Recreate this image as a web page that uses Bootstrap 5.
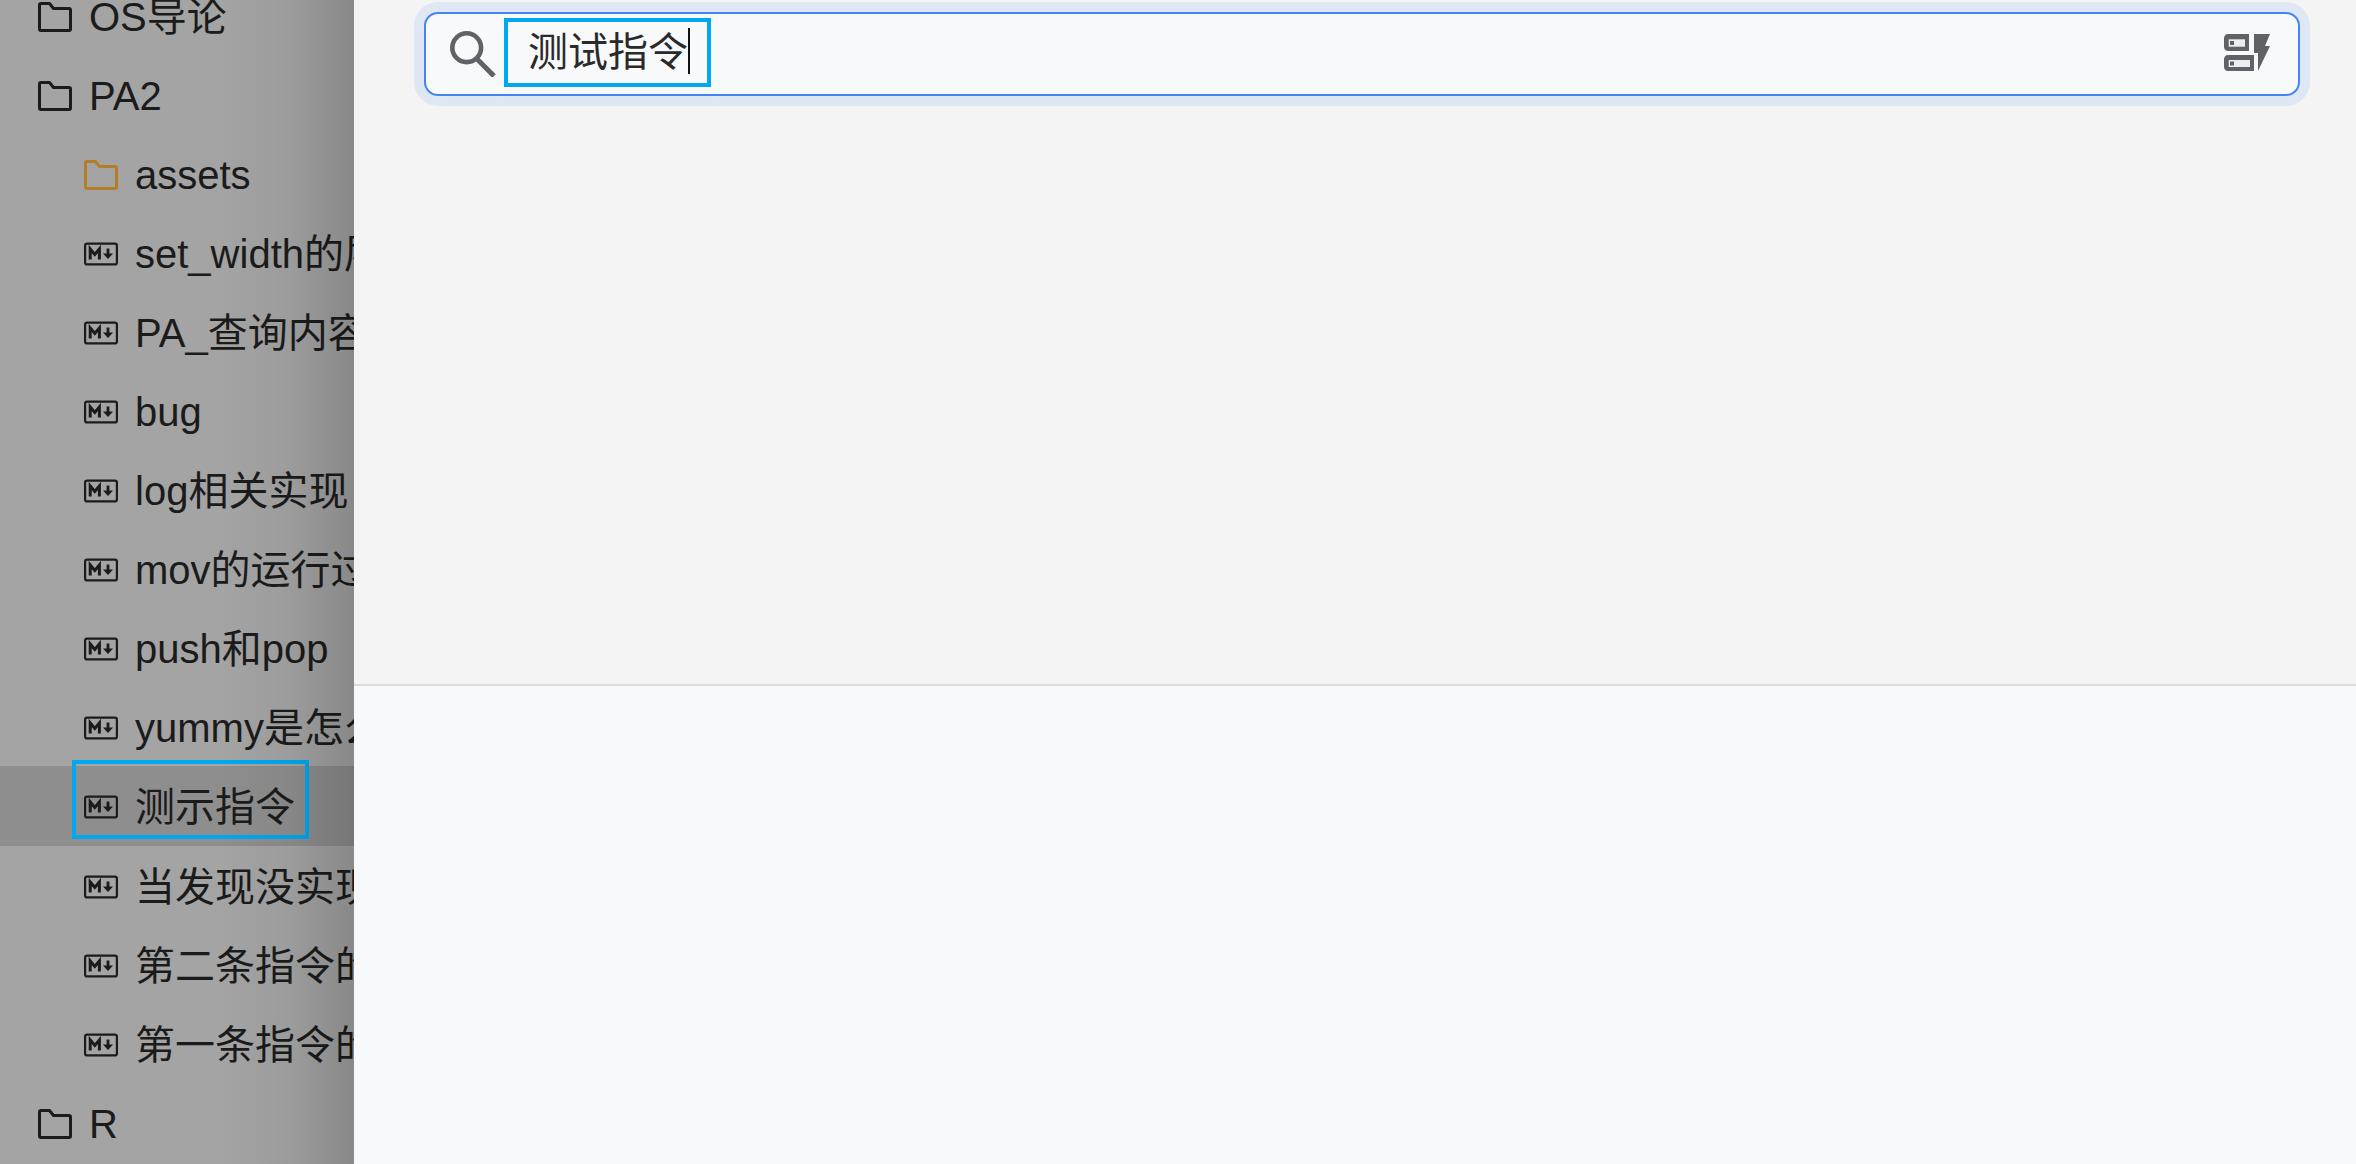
<!DOCTYPE html>
<html lang="zh-CN">
<head>
    <meta charset="UTF-8">
    <meta name="viewport" content="width=device-width, initial-scale=1.0">
    <title>Search</title>
    <link rel="stylesheet" href="https://cdn.jsdelivr.net/npm/bootstrap@5.3.0/dist/css/bootstrap.min.css">
    <style>
        html, body { height: 100%; }
        body {
            background: #f8f9fb;
            font-family: "Liberation Sans", "Noto Sans CJK SC", sans-serif;
            color: #1b1b1b;
            overflow: hidden;
        }
        .icon-sprite { position: absolute; }
        .app-shell { height: 1164px; }
        .file-pane {
            width: 354px;
            flex: 0 0 354px;
            background: #a4a4a4;
            overflow: hidden;
            position: relative;
        }
        .file-pane::after {
            content: "";
            position: absolute;
            inset: 0;
            background: linear-gradient(90deg, rgba(0,0,0,0) 62%, rgba(0,0,0,.05) 82%, rgba(0,0,0,.17) 100%);
            pointer-events: none;
        }
        .file-list { margin-top: -24px; }
        .file-row {
            height: 79px;
            font-size: 40px;
            line-height: 76px;
            white-space: nowrap;
            padding-left: 84px;
            padding-top: 2px;
            gap: 17px;
            flex: 0 0 79px;
        }
        .file-row.top-level { padding-left: 38px; }
        .file-row.selected { background: #8e8e8e; position: relative; height: 80px; flex-basis: 80px; }
        .file-row.selected::before {
            content: "";
            position: absolute;
            left: 72px;
            top: -6px;
            width: 237px;
            height: 79px;
            border: 4px solid #00a8f0;
        }
        .file-icon { flex: 0 0 34px; width: 34px; height: 34px; }
        .folder-orange { color: #b67d28; }
        .search-area { height: 684px; flex: 0 0 684px; background: #f4f4f4; padding: 12px 56px 0 70px; }
        .search-box {
            height: 84px;
            background: #f8f9fb;
            border: 2px solid #4285f4;
            border-radius: 14px;
            box-shadow: 0 0 0 10px #dfe6f4;
            padding: 0 28px 0 24px;
        }
        .search-icon { width: 46px; height: 46px; margin-right: 8px; }
        .query-box {
            width: 207px;
            height: 69px;
            margin-bottom: 3px;
            border: 4px solid #00a8f0;
            font-size: 40px;
            line-height: 61px;
            padding-left: 20px;
            white-space: nowrap;
            color: #2a2a2a;
        }
        .caret-mark {
            display: inline-block;
            width: 2px;
            height: 46px;
            background: #111;
            vertical-align: -8px;
        }
        .mode-icon { width: 46px; height: 37px; margin-bottom: 3px; }
        .pane-divider { height: 2px; flex: 0 0 2px; background: #dcdcdc; }
        .result-area { background: #f8f9fb; }
    </style>
</head>
<body>
    <svg width="0" height="0" class="icon-sprite">
        <symbol id="ic-folder" viewBox="0 0 34 34">
            <path d="M1.5 29V5C1.5 4 2.1 3.5 3 3.5H11.5L15.5 8.5H31C31.9 8.5 32.5 9.1 32.5 10V29C32.5 29.9 31.9 30.5 31 30.5H3C2.1 30.5 1.5 29.9 1.5 29Z" fill="none" stroke="currentColor" stroke-width="3" stroke-linejoin="round"/>
        </symbol>
        <symbol id="ic-md" viewBox="0 0 34 34">
            <rect x="1.1" y="6.6" width="31.8" height="20.8" rx="2" fill="none" stroke="currentColor" stroke-width="2.2"/>
            <path d="M6.2 22.5V12l4.6 5.5 4.6-5.5v10.5" fill="none" stroke="currentColor" stroke-width="3"/>
            <path d="M24 11.5v6" stroke="currentColor" stroke-width="2.8"/>
            <path d="M19 16.5h10l-5 5.5z" fill="currentColor"/>
        </symbol>
    </svg>

    <div class="app-shell d-flex">
        <div class="file-pane">
            <div class="file-list d-flex flex-column">
                <div class="file-row top-level d-flex align-items-center"><svg class="file-icon"><use href="#ic-folder"/></svg><span>OS导论</span></div>
                <div class="file-row top-level d-flex align-items-center"><svg class="file-icon"><use href="#ic-folder"/></svg><span>PA2</span></div>
                <div class="file-row d-flex align-items-center"><svg class="file-icon folder-orange"><use href="#ic-folder"/></svg><span>assets</span></div>
                <div class="file-row d-flex align-items-center"><svg class="file-icon"><use href="#ic-md"/></svg><span>set_width的层面</span></div>
                <div class="file-row d-flex align-items-center"><svg class="file-icon"><use href="#ic-md"/></svg><span>PA_查询内容</span></div>
                <div class="file-row d-flex align-items-center"><svg class="file-icon"><use href="#ic-md"/></svg><span>bug</span></div>
                <div class="file-row d-flex align-items-center"><svg class="file-icon"><use href="#ic-md"/></svg><span>log相关实现</span></div>
                <div class="file-row d-flex align-items-center"><svg class="file-icon"><use href="#ic-md"/></svg><span>mov的运行过程</span></div>
                <div class="file-row d-flex align-items-center"><svg class="file-icon"><use href="#ic-md"/></svg><span>push和pop</span></div>
                <div class="file-row d-flex align-items-center"><svg class="file-icon"><use href="#ic-md"/></svg><span>yummy是怎么</span></div>
                <div class="file-row selected d-flex align-items-center"><svg class="file-icon"><use href="#ic-md"/></svg><span>测示指令</span></div>
                <div class="file-row d-flex align-items-center"><svg class="file-icon"><use href="#ic-md"/></svg><span>当发现没实现</span></div>
                <div class="file-row d-flex align-items-center"><svg class="file-icon"><use href="#ic-md"/></svg><span>第二条指令的</span></div>
                <div class="file-row d-flex align-items-center"><svg class="file-icon"><use href="#ic-md"/></svg><span>第一条指令的</span></div>
                <div class="file-row top-level d-flex align-items-center"><svg class="file-icon"><use href="#ic-folder"/></svg><span>R</span></div>
            </div>
        </div>

        <div class="flex-grow-1 d-flex flex-column">
            <div class="search-area">
                <div class="search-box d-flex align-items-center">
                    <svg class="search-icon" viewBox="0 0 46 46">
                        <circle cx="16.7" cy="16.7" r="14.4" fill="none" stroke="#5f6368" stroke-width="4.6"/>
                        <path d="M26.5 27.5l17.5 17.5" stroke="#5f6368" stroke-width="5"/>
                    </svg>
                    <div class="query-box">测试指令<span class="caret-mark"></span></div>
                    <svg class="mode-icon ms-auto" viewBox="0 0 46 37">
                        <path d="M4 0H25V17H4C1.8 17 0 15.2 0 13V4C0 1.8 1.8 0 4 0Z" fill="#5f6368"/>
                        <rect x="4.7" y="5.3" width="16.3" height="7.4" fill="#eceef1"/>
                        <rect x="6" y="7" width="4" height="4" fill="#5f6368"/>
                        <path d="M4 21H30V37H4C1.8 37 0 35.2 0 33V25C0 22.8 1.8 21 4 21Z" fill="#5f6368"/>
                        <rect x="4.7" y="26" width="21.3" height="7" fill="#eceef1"/>
                        <rect x="6" y="27.5" width="4" height="4" fill="#5f6368"/>
                        <path d="M30 0H46L41 12H46L34 37V19H30Z" fill="#5f6368"/>
                    </svg>
                </div>
            </div>
            <div class="pane-divider"></div>
            <div class="result-area flex-grow-1"></div>
        </div>
    </div>

    <script src="https://cdn.jsdelivr.net/npm/bootstrap@5.3.0/dist/js/bootstrap.bundle.min.js"></script>
</body>
</html>
